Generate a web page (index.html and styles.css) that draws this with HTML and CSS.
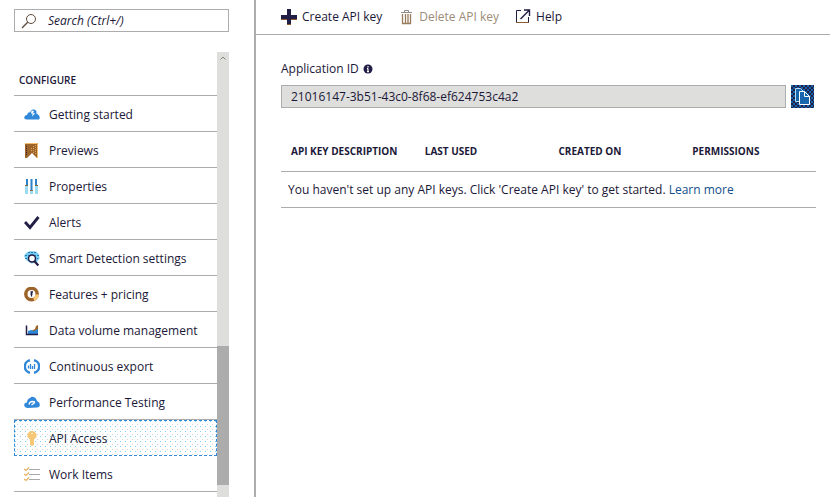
FILE: index.html
```html
<!DOCTYPE html>
<html lang="en">
<head>
<meta charset="utf-8">
<title>API Access</title>
<link rel="stylesheet" href="styles.css">
</head>
<body>
<div class="shell">
  <aside class="sidebar">
    <label class="search">
      <svg width="16" height="16" viewBox="0 0 16 16" fill="none" stroke="#5c4a3c"><circle cx="10" cy="6" r="4.5"/><path d="M6.7 9.3L1 15" stroke-width="1.3"/></svg>
      <input type="search" placeholder="Search (Ctrl+/)" aria-label="Search">
    </label>
    <div class="menu">
      <nav class="menu-list">
        <h2 class="menu-title">CONFIGURE</h2>
        <a class="item" href="#"><svg class="icon" viewBox="0 0 16 16"><path fill="#3288d8" d="M3 12.500Q0 12.500 .3 10 .8 8 3 8 4 4.500 6 5.500 7 2 10 2.500 13 3 13.300 7 16 8.500 15.800 11L15 12.500z"/><path fill="#fff" d="M7.500 3.500l2.500.5-1 2 2 .5-3 3 .7-3L7 6.500zM12 3.500l1.300 3.500-1-.5z"/></svg>Getting started</a>
        <a class="item" href="#"><svg class="icon" viewBox="0 0 16 16"><path fill="#9c6428" d="M1 0h13v15h-1l-5-5-5 5H1z"/><path fill="none" stroke="#f3bd69" d="M1 .5h12.500V15"/><path stroke="#dca55a" stroke-dasharray="1 1" d="M11.500 2v10M9.500 3v7M7.500 5v4"/><path stroke="#3a2434" stroke-dasharray="1 1" d="M2.500 3v10"/></svg>Previews</a>
        <a class="item" href="#"><svg class="icon" viewBox="0 0 16 16" fill="none"><path stroke="#9bdcf3" stroke-width="3" d="M2.500 7v8M7.500 11v4M12.500 7v8"/><path stroke="#2d82cb" stroke-width="2" d="M3 0v6M7.500 0v12M12 0v6"/><path stroke="#8a6640" d="M1 6.500h3M6 11.500h3M11 6.500h3"/></svg>Properties</a>
        <a class="item" href="#"><svg class="icon" viewBox="0 0 16 16"><path d="M1 7l5 5.500L14.500 2" fill="none" stroke="#211d45" stroke-width="2.800"/></svg>Alerts</a>
        <a class="item" href="#"><svg class="icon" viewBox="0 0 16 16" fill="none"><path fill="#75ccf0" d="M2 2l4-2 6 .5 3 3 .5 4-3 4-5 1-5-3L0 5z"/><path stroke="#277cb7" stroke-dasharray="2 1" d="M4 1.500h8M1 4.500h14M1 7.500h13"/><circle cx="8" cy="7.500" r="3.500" fill="#fff" stroke="#211d45" stroke-width="1.500"/><path stroke="#211d45" stroke-width="2.200" d="M10.300 10l4 4.500"/></svg>Smart Detection settings</a>
        <a class="item" href="#"><svg class="icon" viewBox="0 0 16 16" fill="none"><circle cx="7.500" cy="7" r="5.700" stroke="#9c6428" stroke-width="3.500"/><path stroke="#f8c778" stroke-width="3.500" d="M13.200 7.500a5.700 5.700 0 0 1-3.500 4.900"/><path stroke="#211d45" stroke-width="1.300" d="M7.500 4.500v5M6.500 5h2.500M6.500 7h2"/></svg>Features + pricing</a>
        <a class="item" href="#"><svg class="icon" viewBox="0 0 16 16"><path fill="#9c6428" d="M7 8l4-2 1-3 2-1v7z"/><path fill="#2d87d8" d="M4 11V8l3-1 3 1 4-2v5z"/><path fill="none" stroke="#211d45" stroke-width="1.500" d="M2.500 2.500v9H14"/></svg>Data volume management</a>
        <a class="item" href="#"><svg class="icon" viewBox="0 0 16 16" fill="none" stroke="#3288d8"><path stroke-width="2.500" d="M6 1.300a6.300 6.300 0 0 0 0 12.400M10 1.300a6.300 6.300 0 0 1 0 12.400"/><path stroke-width="1.300" d="M4.500 6.500v3M6.500 5v5M8.500 7v3M10.500 5v5"/></svg>Continuous export</a>
        <a class="item" href="#"><svg class="icon" viewBox="0 0 16 16"><path fill="#3288d8" d="M3.500 13Q0 12.500 .2 9.500 .7 7.200 3 7.500 3 4 6 3 7.500 1.200 9.500 2 12 2.500 13 6 16 7 15.800 10.500 15.500 12.500 13 12.500z"/><path fill="none" stroke="#fff" stroke-width="1.300" d="M5 9.500Q5.500 6.500 8.500 6.500L11 7M7.500 10L11 7.500"/></svg>Performance Testing</a>
        <a class="item selected" href="#" aria-current="page"><svg class="icon" viewBox="0 0 16 16"><path fill="#f6c777" d="M5 1l2-1h2l2 1 1.500 2v3L10 8.500V14l-2 1-2-1V8.500L3.500 6V3z"/><path stroke="#fdebcb" d="M7 2.500h2"/></svg>API Access</a>
        <a class="item" href="#"><svg class="icon" viewBox="0 0 16 16" fill="none"><path stroke="#a9a9a9" d="M5 2.500h11M5 7.500h11M5 12.500h11"/><path stroke="#e9b262" stroke-width="1.300" d="M0 2l2 1.500L5 .5M0 7l2 1.500 3-3M0 12l2 1.500 3-3"/></svg>Work Items</a>
      </nav>
      <div class="scrollbar">
        <svg class="scroll-arrow" viewBox="0 0 12 12"><path d="M3.500 7.500L6 5l2.500 2.500" fill="none" stroke="#8b8178"/></svg>
        <div class="scroll-thumb"></div>
      </div>
    </div>
  </aside>
  <main class="main">
    <div class="toolbar">
      <button class="command" type="button"><svg class="icon" viewBox="0 0 16 16"><path stroke="#211d45" stroke-width="4" d="M0 8h16M8 0v16"/><path stroke="#8b5b32" d="M0 10.500h6M10 10.500h6M6 15.500h4"/></svg>Create API key</button>
      <button class="command" type="button" disabled><svg class="icon" viewBox="0 0 16 16" fill="none" stroke="#987b5b"><path d="M3 3.500h11M6.500 3V1.500h4V3" stroke="#8e8a86"/><path d="M4.500 5v9.500h8V5M7.500 5v9M10 5v9" stroke-width="1.300"/></svg>Delete API key</button>
      <button class="command" type="button"><svg class="icon" viewBox="0 0 16 16" fill="none" stroke="#211d45"><path d="M6 1.500H1.500v12h12V8"/><path d="M9 1h5.500v6M14 1.500L5.500 10" stroke-width="1.400"/><path d="M1 13.500h13" stroke="#8b5b32"/></svg>Help</button>
    </div>
    <section class="content">
      <div class="label-row">
        <label for="app-id">Application ID</label>
        <svg width="10" height="10" viewBox="0 0 10 10"><circle cx="5" cy="5" r="4.500" fill="#211d45"/><path d="M5 2v1.500M5 4.500V8M4 4.700h1M4 7.700h2" stroke="#fff" stroke-width="1.200"/></svg>
      </div>
      <div class="id-row">
        <input id="app-id" class="id-field" type="text" readonly value="21016147-3b51-43c0-8f68-ef624753c4a2">
        <button class="copy" type="button" aria-label="Copy"><svg width="23" height="23" viewBox="0 0 23 23"><g fill="#1765ad" stroke="#fff"><path stroke="#b9dff5" d="M4.500 3.500h5l3 3v10h-8z"/><path d="M8.500 6.500h5l5 5v8h-10z"/><path fill="none" d="M13.500 6.500v5h5"/></g></svg></button>
      </div>
      <table class="keys">
        <thead><tr><th>API KEY DESCRIPTION</th><th>LAST USED</th><th>CREATED ON</th><th>PERMISSIONS</th></tr></thead>
        <tbody><tr><td colspan="4">You haven't set up any API keys. Click 'Create API key' to get started. <a href="#">Learn more</a></td></tr></tbody>
      </table>
    </section>
  </main>
</div>
</body>
</html>
```
FILE: styles.css
```css
* { box-sizing: border-box; }

body {
  margin: 0;
  background: #fff;
  color: #1b1838;
  font: 12px/16px "Open Sans", "Noto Sans", sans-serif;
}

input, button { font: inherit; color: inherit; }

.shell { display: flex; height: 100vh; overflow: hidden; }

.sidebar {
  display: flex;
  flex-direction: column;
  flex: 0 0 256px;
  gap: 20px;
  padding: 9px 25px 0 14px;
  border-right: 2px solid #acacac;
}

.search {
  display: flex;
  align-items: center;
  flex: none;
  gap: 11px;
  height: 23px;
  padding: 0 6px;
  border: 1px solid #acacac;
}
.search input {
  flex: 1;
  min-width: 0;
  padding: 0;
  border: 0;
  outline: 0;
  background: none;
  font-style: italic;
}
.search input::placeholder { color: #1b1838; opacity: 1; }

.menu { display: flex; flex: 1; min-height: 0; }
.menu-list { flex: 1; min-width: 0; overflow: hidden; }
.menu-title {
  margin: 0;
  padding: 20px 5px 7px;
  border-bottom: 1px solid #acacac;
  font-size: 10px;
  font-weight: 600;
}

.icon { flex: none; width: 16px; height: 16px; }

.item {
  display: flex;
  align-items: center;
  gap: 9px;
  height: 36px;
  padding: 2px 10px 0;
  border-bottom: 1px solid #acacac;
  color: inherit;
  text-decoration: none;
  white-space: nowrap;
}
.item.selected {
  padding: 1px 9px 0;
  border: 1px dashed #3288d8;
  background:
    radial-gradient(circle at 0 0, #7fd3f3 1px, transparent 1px) 0 0 / 5px 5px,
    radial-gradient(circle at 0 0, #d4d4d4 1px, transparent 1px) 2px 3px / 5px 5px;
}

.scrollbar {
  display: grid;
  grid-template-rows: 294fr 139fr 12fr;
  width: 12px;
  background: #dededc;
}
.scroll-arrow { width: 12px; height: 12px; }
.scroll-thumb { background: #acacac; }

.main { flex: 1; min-width: 0; }

.toolbar {
  display: flex;
  gap: 16px;
  height: 35px;
  padding: 0 25px;
  border-bottom: 1px solid #acacac;
}
.command {
  display: flex;
  align-items: center;
  gap: 5px;
  padding: 0;
  border: 0;
  background: none;
  white-space: nowrap;
}
.command:disabled { color: #9c8c77; }

.content { padding: 26px 14px 0 25px; }
.label-row { display: flex; align-items: center; gap: 4px; }

.id-row { display: flex; gap: 5px; margin: 8px 2px 0 0; }
.id-field {
  flex: 1;
  min-width: 0;
  height: 23px;
  padding: 0 9px;
  border: 1px solid #acacac;
  background: #dededc;
}
.copy {
  width: 23px;
  height: 23px;
  padding: 0;
  border: 0;
  background: repeating-conic-gradient(#211d45 0 25%, #1765ad 0 50%) 0 0 / 4px 4px #211d45;
}
.copy svg { display: block; }

.keys {
  width: 100%;
  margin-top: 23px;
  border-collapse: collapse;
  table-layout: fixed;
}
.keys th, .keys td {
  border-bottom: 1px solid #acacac;
  text-align: left;
  white-space: nowrap;
}
.keys th { height: 40px; padding: 0 10px; font-size: 10px; font-weight: 700; }
.keys td { height: 36px; padding: 2px 7px 0; }
.keys a { color: #134f8c; text-decoration: none; }
```
